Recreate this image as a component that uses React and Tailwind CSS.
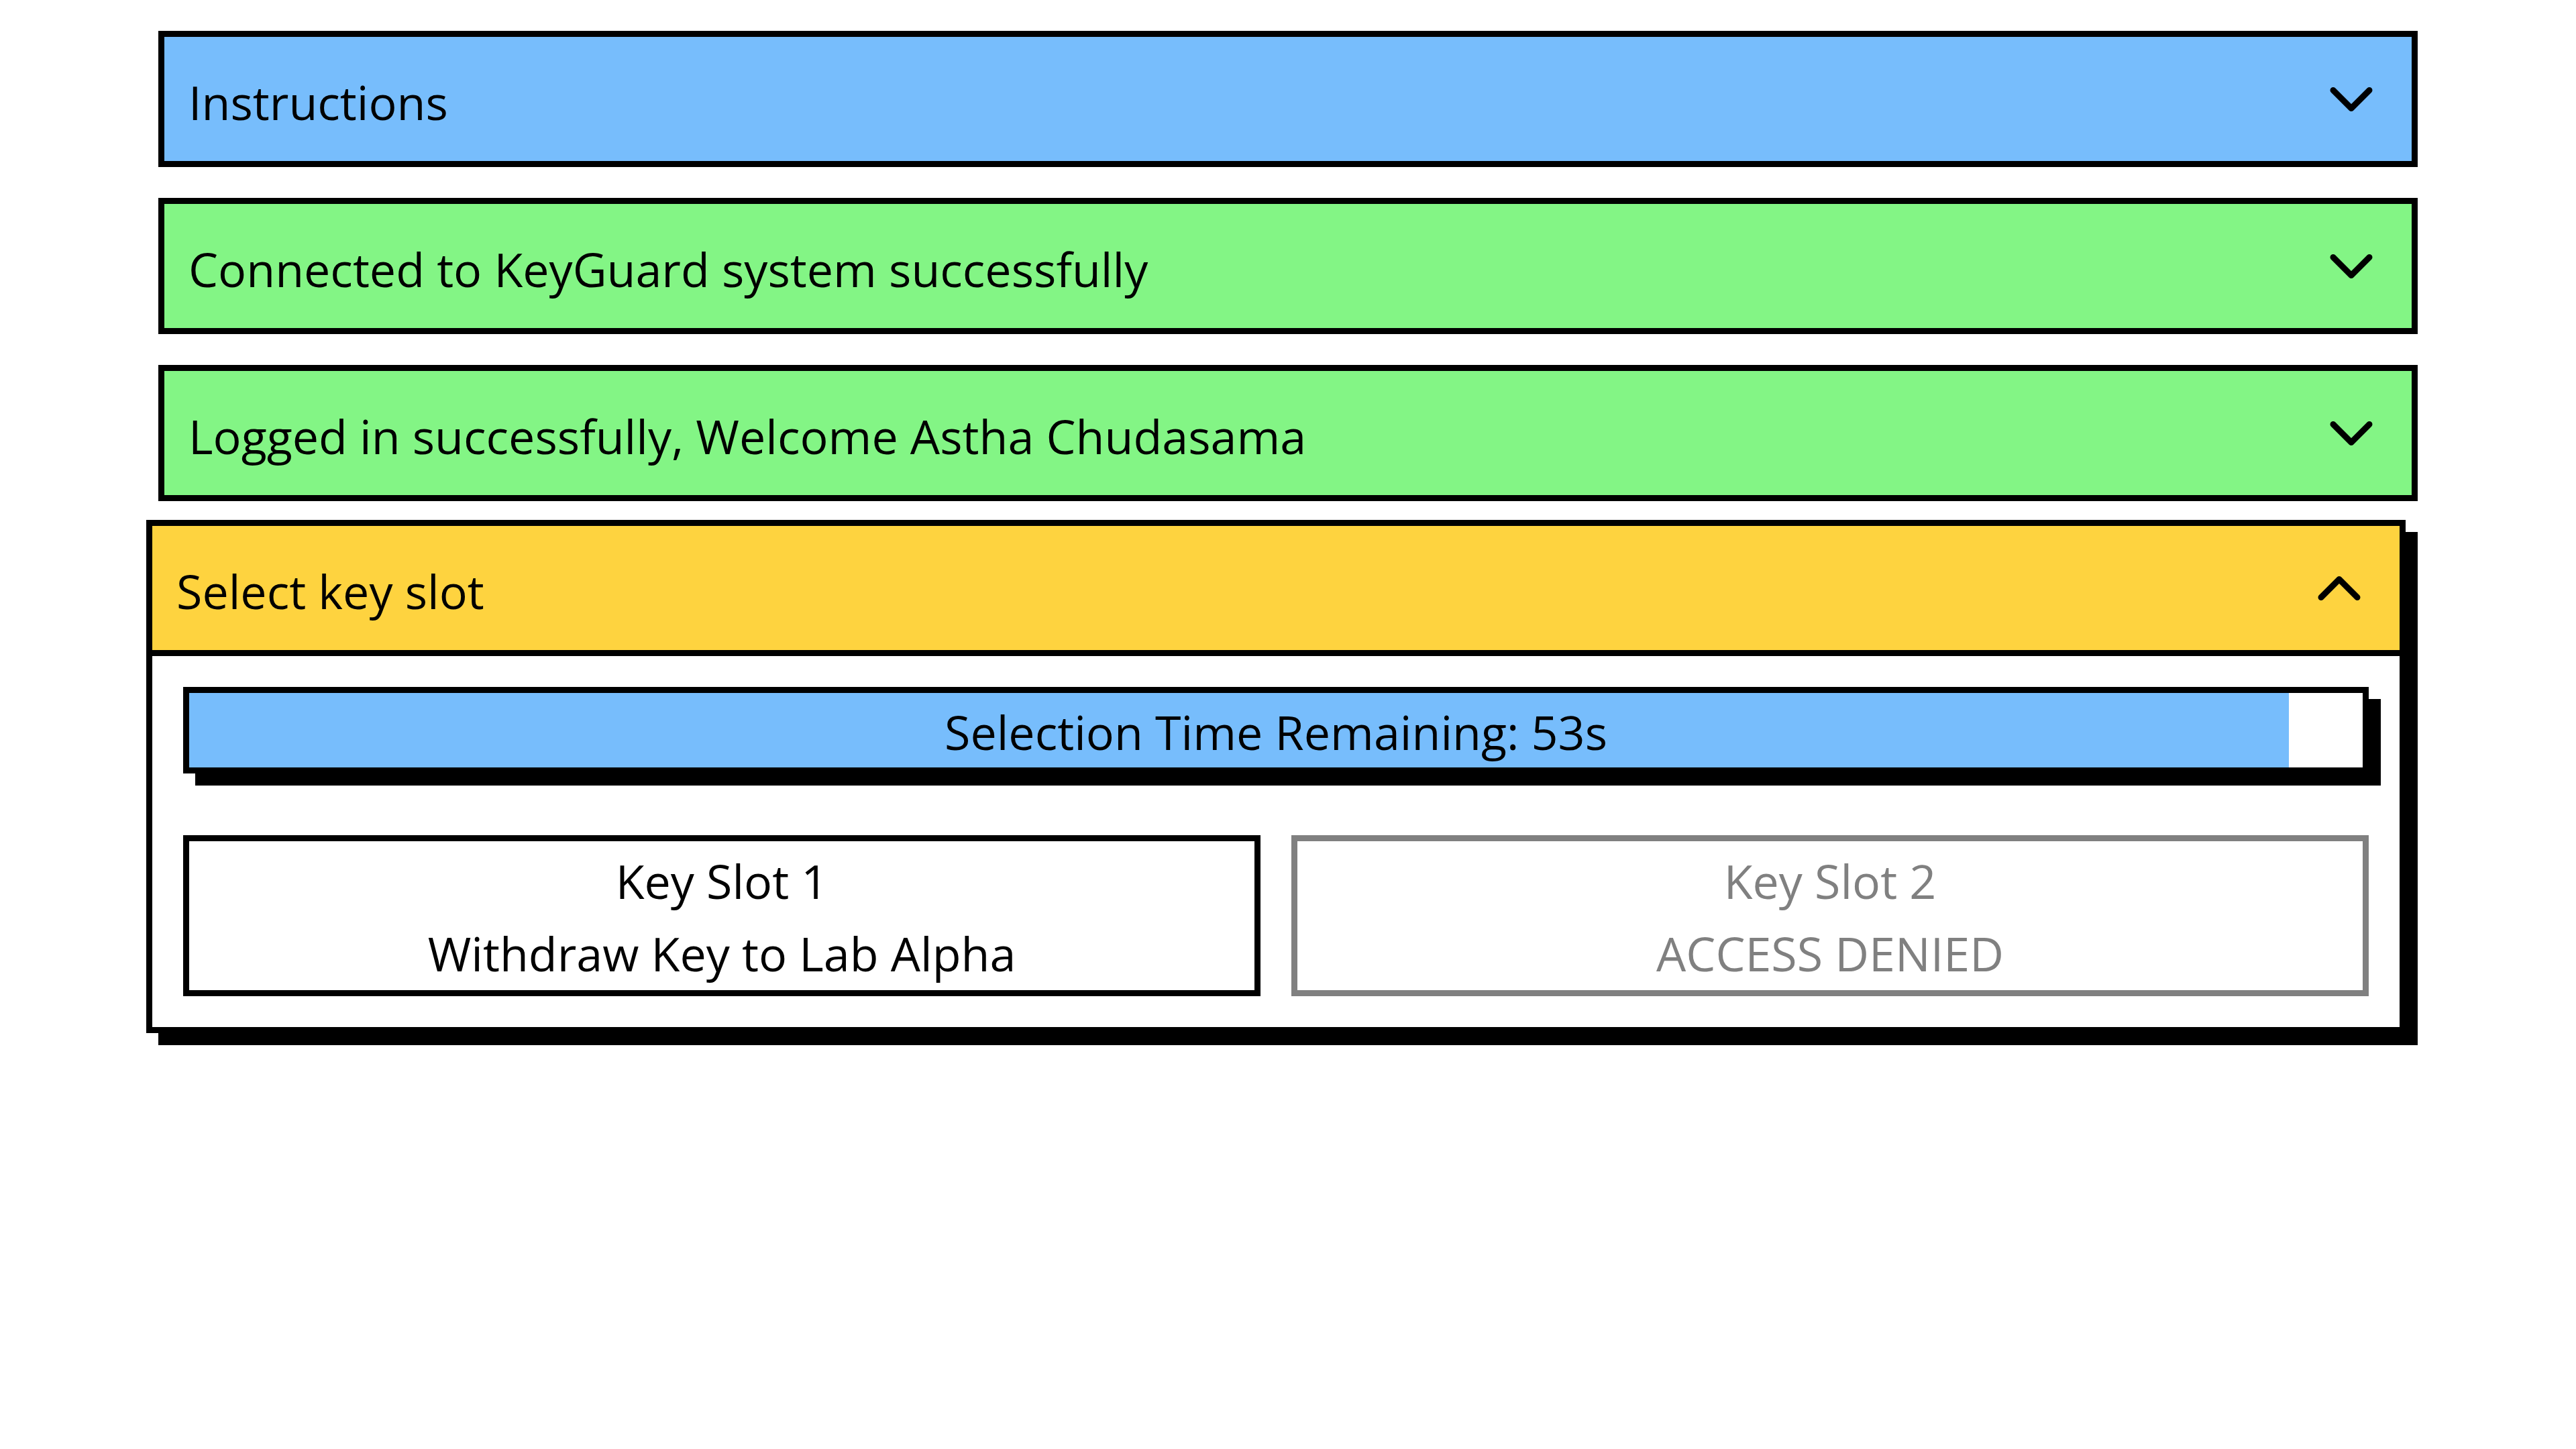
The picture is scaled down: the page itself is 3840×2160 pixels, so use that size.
import React, { useState } from 'react';
import { ChevronDown, ChevronUp } from 'lucide-react';

const sections = [
  { id: 'instructions', title: 'Instructions', color: 'bg-[#77bdfc]' },
  { id: 'connect', title: 'Connected to KeyGuard system successfully', color: 'bg-[#83f585]' },
  { id: 'login', title: 'Logged in successfully, Welcome Astha Chudasama', color: 'bg-[#83f585]' },
];

const slots = [
  { id: 1, title: 'Key Slot 1', action: 'Withdraw Key to Lab Alpha', allowed: true },
  { id: 2, title: 'Key Slot 2', action: 'ACCESS DENIED', allowed: false },
];

const Header = ({ title, color, open }) => (
  <div className={`flex h-[185px] items-center justify-between px-[36px] ${color}`}>
    <span className="pt-[10px] text-[70px] leading-[1.5] text-black">{title}</span>
    {open ? (
      <ChevronUp size={108} strokeWidth={2} className="shrink-0 text-black" />
    ) : (
      <ChevronDown size={108} strokeWidth={2} className="shrink-0 text-black" />
    )}
  </div>
);

export default function App() {
  const [remaining] = useState(53);
  const progress = 0.966;

  return (
    <div className="min-h-screen bg-white pt-[46px] font-['Open_Sans','Noto_Sans',sans-serif]">
      <div className="mx-auto flex w-[3368px] flex-col gap-[46px]">
        {sections.map((s) => (
          <div key={s.id} className="border-[9px] border-black">
            <Header title={s.title} color={s.color} />
          </div>
        ))}

        <div className="-translate-x-[18px] -translate-y-[18px] border-[9px] border-black bg-white shadow-[18px_18px_0_#000]">
          <div className="border-b-[9px] border-black">
            <Header title="Select key slot" color="bg-[#fed33f]" open />
          </div>

          <div className="flex flex-col gap-[92px] p-[46px]">
            <div className="relative h-[129px] border-[9px] border-black bg-white shadow-[18px_18px_0_#000]">
              <div className="h-full bg-[#77bdfc]" style={{ width: `${progress * 100}%` }} />
              <div className="absolute inset-0 flex items-center justify-center pt-[6px] text-[70px] leading-[1.5] text-black">
                Selection Time Remaining: {remaining}s
              </div>
            </div>

            <div className="grid grid-cols-2 gap-[46px]">
              {slots.map((slot) => (
                <button
                  key={slot.id}
                  disabled={!slot.allowed}
                  className={`flex h-[240px] flex-col items-center justify-center border-[9px] bg-white pt-[4px] text-[70px] leading-[108px] ${
                    slot.allowed ? 'border-black text-black' : 'border-[#808080] text-[#808080]'
                  }`}
                >
                  <span>{slot.title}</span>
                  <span>{slot.action}</span>
                </button>
              ))}
            </div>
          </div>
        </div>
      </div>
    </div>
  );
}
